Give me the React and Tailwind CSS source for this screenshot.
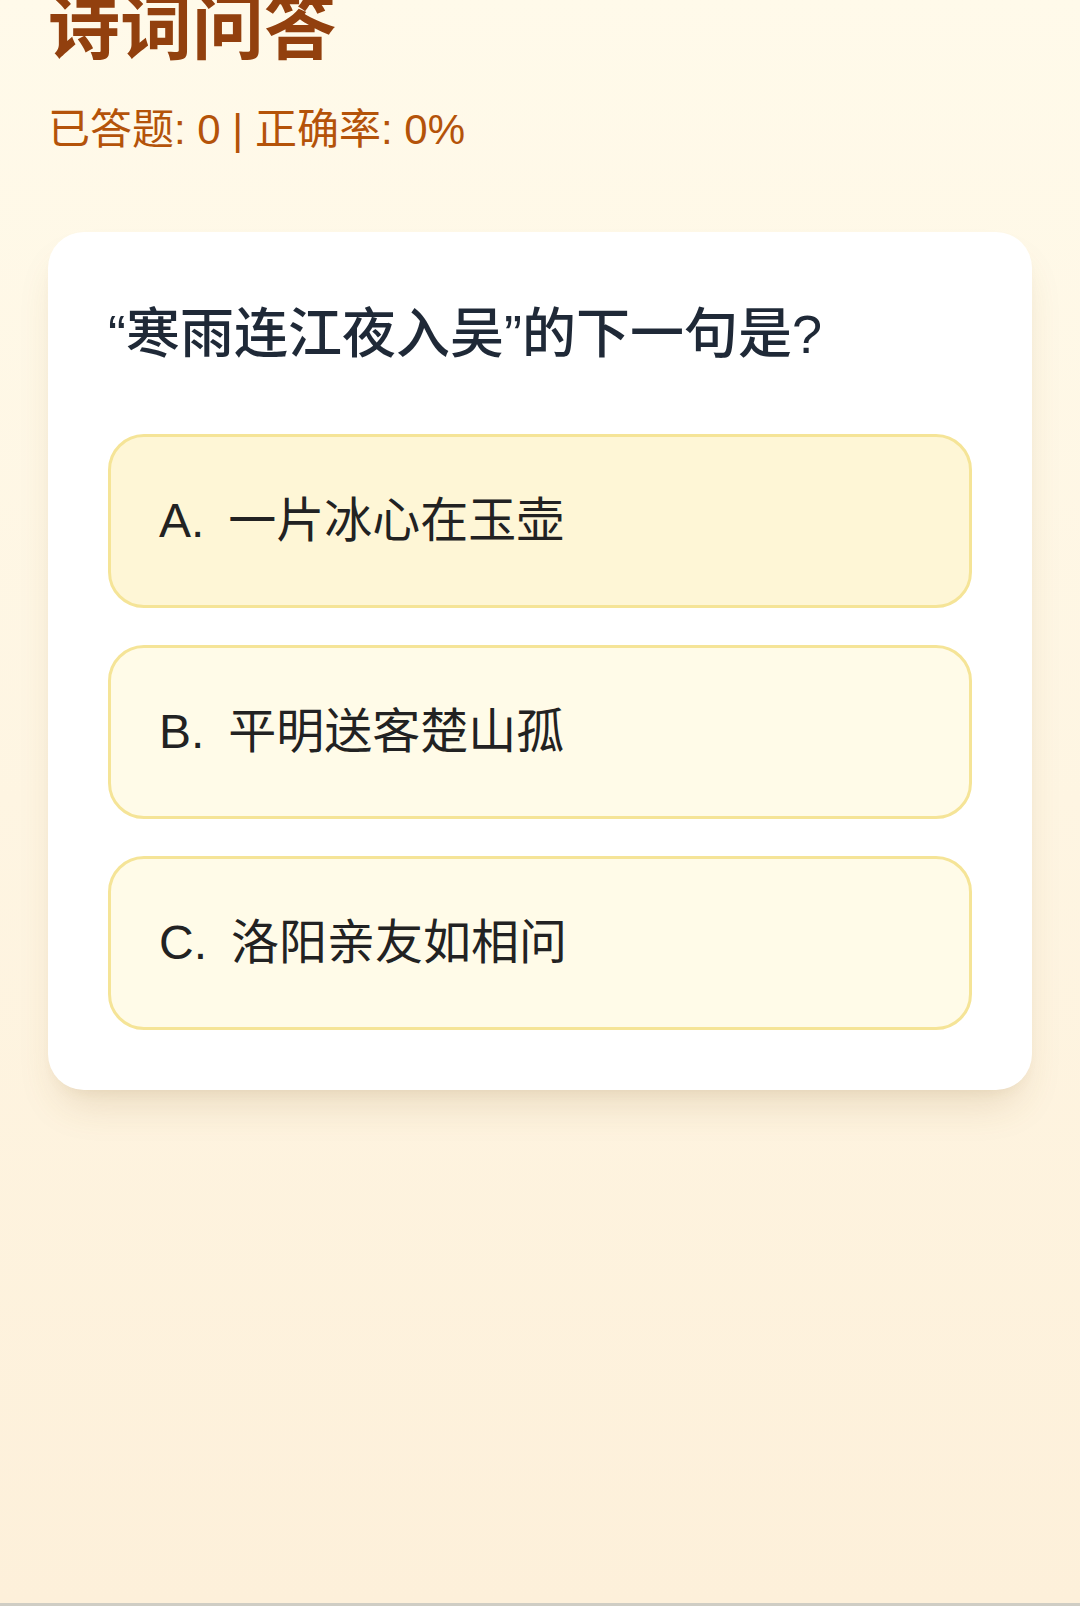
import { useState } from 'react';

const question = {
  text: '“寒雨连江夜入吴”的下一句是?',
  options: [
    { key: 'A', label: '一片冰心在玉壶' },
    { key: 'B', label: '平明送客楚山孤' },
    { key: 'C', label: '洛阳亲友如相问' },
  ],
};

function App() {
  const [answered] = useState(0);
  const [hovered, setHovered] = useState('A');

  return (
    <div className="flex flex-col min-h-[1606px] bg-linear-to-b from-[#fffaea] to-[#fdf0da] border-b-[3px] border-[#cfcdc4] px-[48px] font-['Liberation_Sans','Noto_Sans_CJK_SC',sans-serif]">
      {/* Encabezado */}
      <h1 className="-mt-[20px] mb-[24px] text-[72px] leading-[96px] font-bold text-[#92400e]">诗词问答</h1>
      <p className="mb-[72px] text-[42px] leading-[60px] text-[#b45309]">
        已答题: {answered} | 正确率: 0%
      </p>

      {/* Tarjeta de pregunta */}
      <div className="bg-white rounded-[36px] p-[60px] shadow-[0_24px_40px_-12px_rgba(140,100,40,0.18),0_8px_16px_-10px_rgba(140,100,40,0.12)]">
        <h2 className="mb-[58px] text-[54px] leading-[84px] font-medium text-[#1f2937]">{question.text}</h2>
        <div className="flex flex-col gap-[37px]">
          {question.options.map((opt) => (
            <button
              key={opt.key}
              onMouseEnter={() => setHovered(opt.key)}
              className={`flex items-center text-left rounded-[36px] border-[3px] border-[#f5e497] p-[48px] text-[48px] leading-[72px] text-[#222222] ${
                hovered === opt.key ? 'bg-[#fef6d6]' : 'bg-[#fffbe8]'
              }`}
            >
              <span className="mr-[24px]">{opt.key}.</span>
              <span>{opt.label}</span>
            </button>
          ))}
        </div>
      </div>
    </div>
  );
}

export default App;
